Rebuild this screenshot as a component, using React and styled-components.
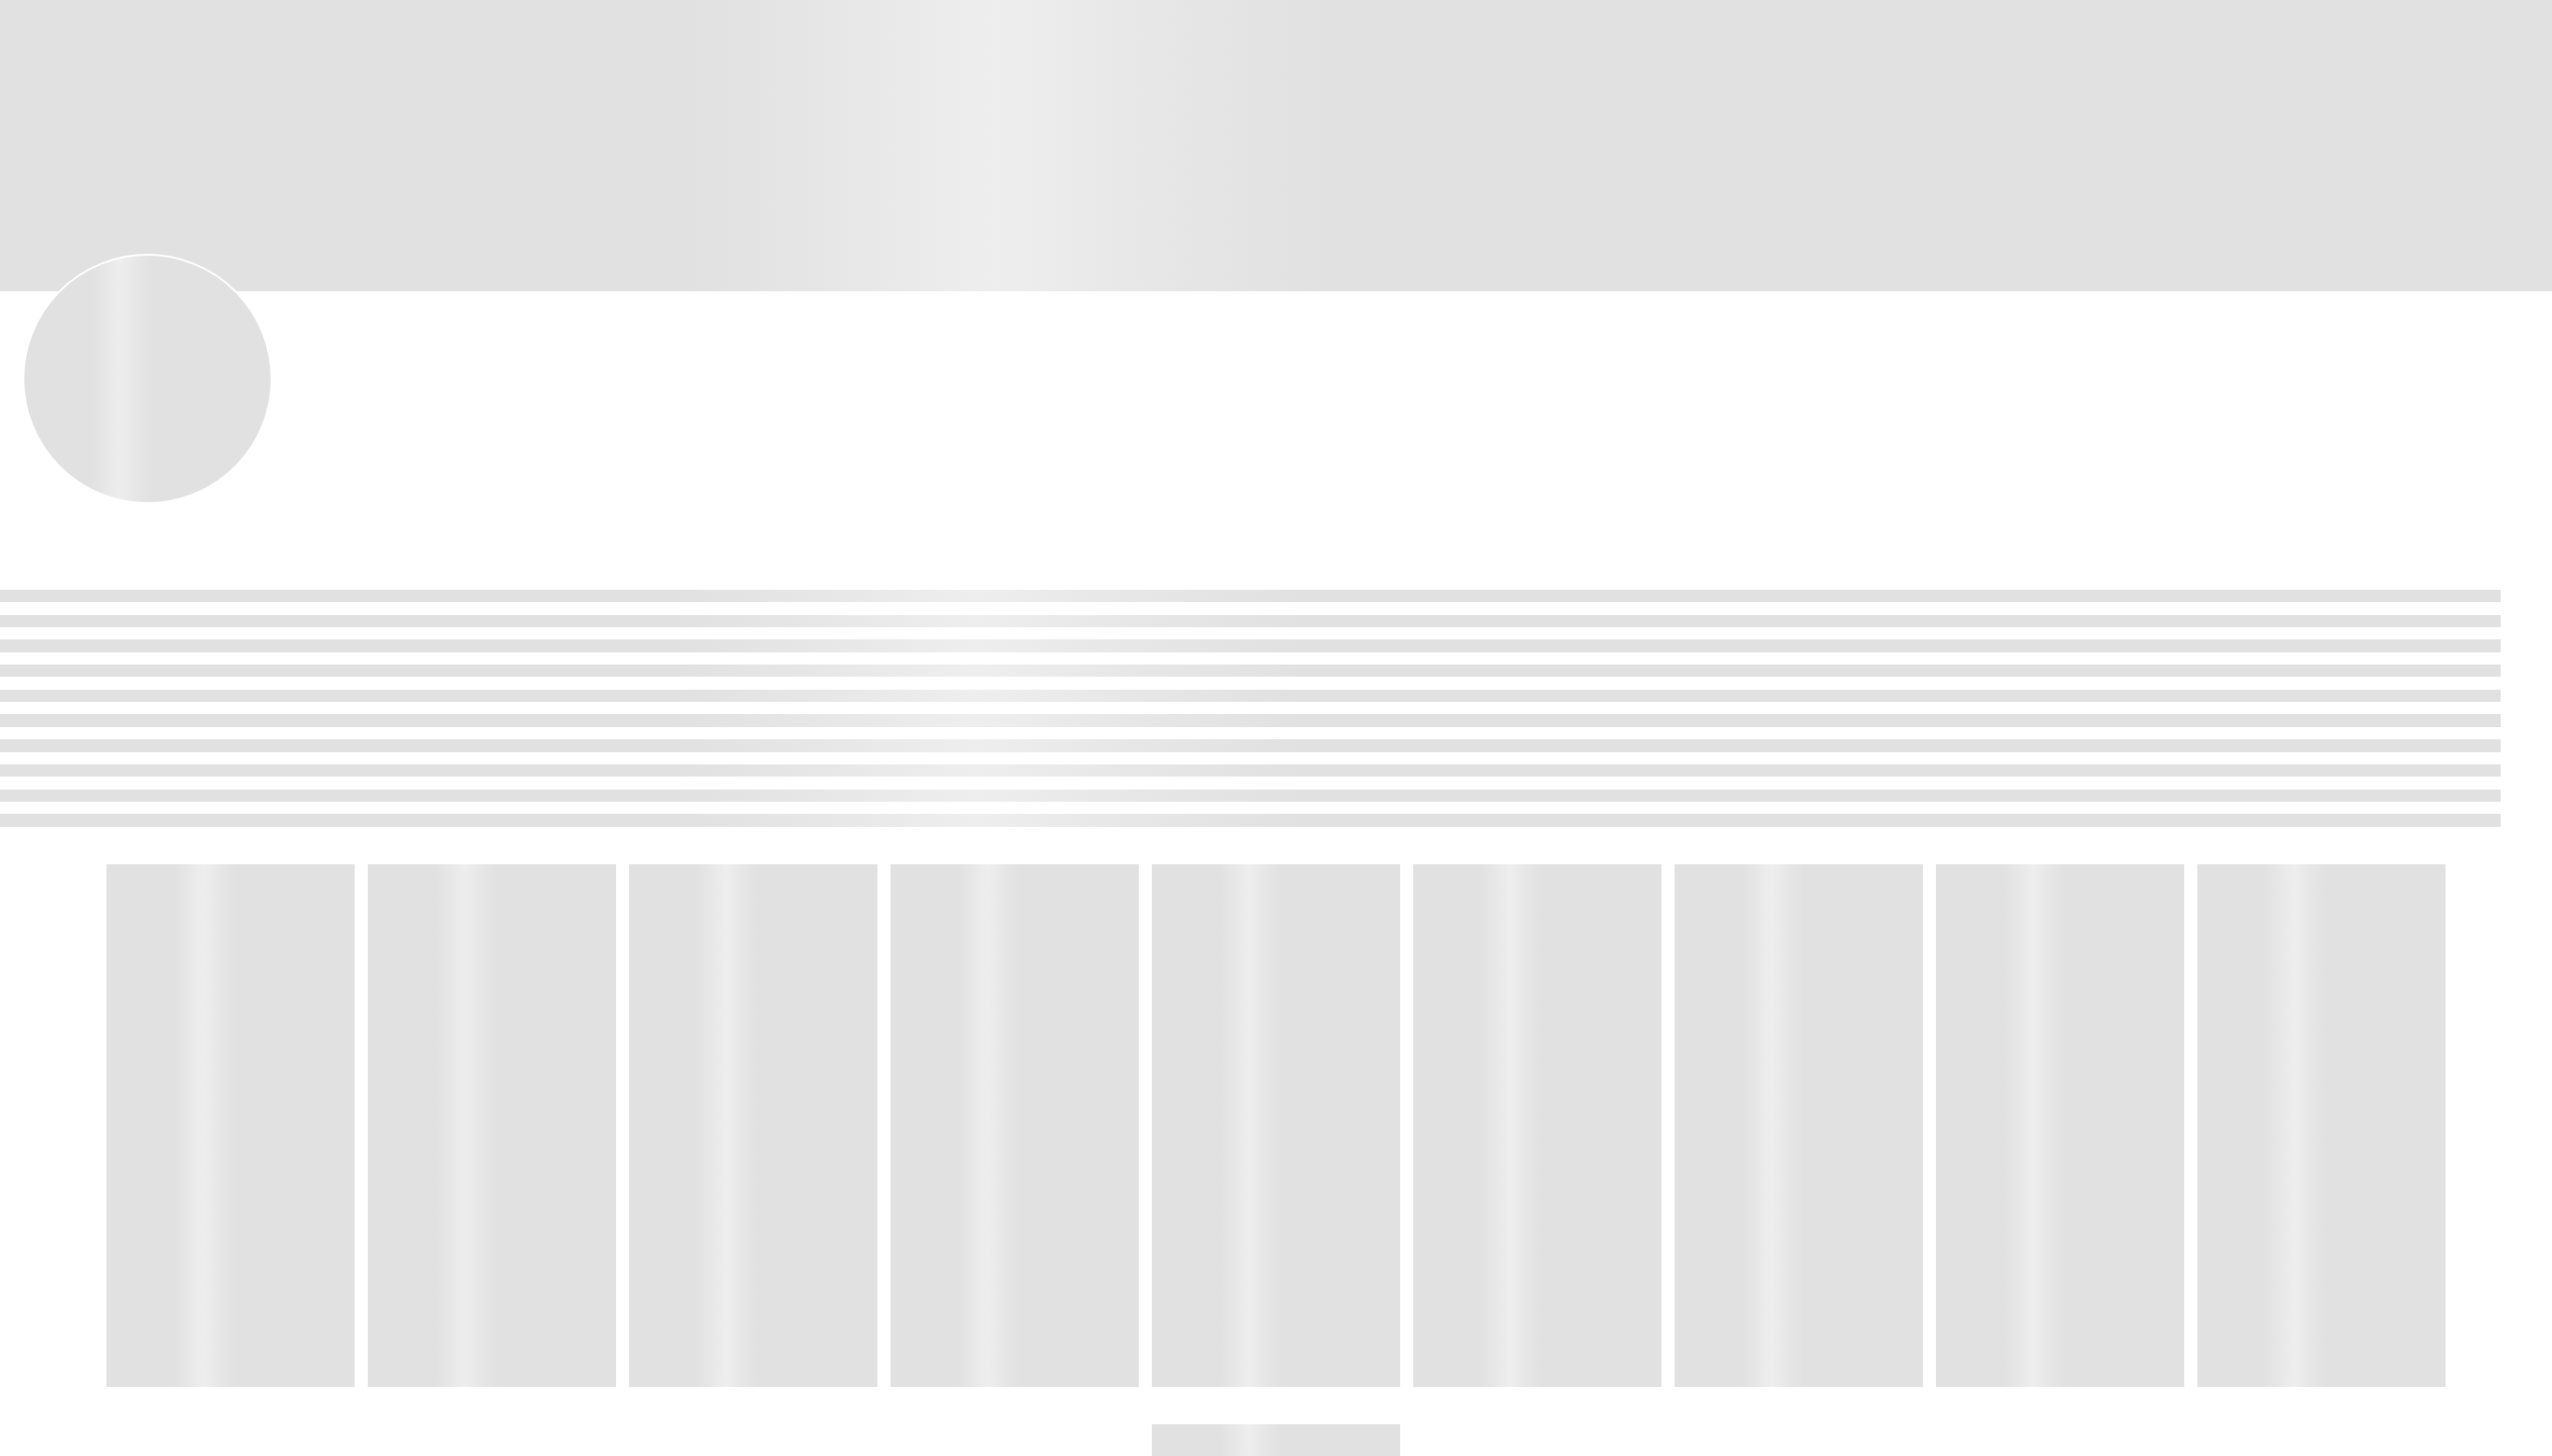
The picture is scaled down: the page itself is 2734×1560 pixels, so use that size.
import React from 'react'
import styled, { createGlobalStyle, css } from 'styled-components'

const GlobalStyle = createGlobalStyle`
  html, body {
    margin: 0;
    padding: 0;
    background: #fff;
    font-family: 'Liberation Sans', Arial, sans-serif;
  }
`

// frozen frame of the loading shimmer
const shimmer = css`
  background-color: #e1e1e1;
  background-image: linear-gradient(
    90deg,
    #e1e1e1 27%,
    #e7e7e7 33%,
    #eeeeee 39%,
    #e7e7e7 45%,
    #e1e1e1 52%
  );
`

const Page = styled.div`
  width: 100%;
  min-height: 100vh;
  background: #fff;
`

const Banner = styled.div`
  ${shimmer};
  width: 100%;
  height: 312px;
`

const ProfileHeader = styled.div`
  display: flex;
  align-items: flex-start;
  padding-left: 24px;
  margin-top: -40px;
  position: relative;
`

const Avatar = styled.div`
  ${shimmer};
  width: 264px;
  height: 264px;
  border-radius: 50%;
  border: 2px solid #fff;
`

const TextBlock = styled.div`
  width: 98%;
  margin-top: 92px;
  display: flex;
  flex-direction: column;
  gap: 13.3px;
`

const Line = styled.div`
  ${shimmer};
  height: 13.4px;
  width: 100%;
`

const CardGrid = styled.div`
  margin-top: 40px;
  display: flex;
  flex-wrap: wrap;
  justify-content: center;
  column-gap: 14px;
  row-gap: 40px;
`

const Card = styled.div`
  ${shimmer};
  width: 266px;
  height: 560px;
`

export default function App() {
  const lines = Array.from({ length: 10 })
  const cards = Array.from({ length: 10 })

  return (
    <Page>
      <GlobalStyle />
      <Banner />
      <ProfileHeader>
        <Avatar />
      </ProfileHeader>
      <TextBlock>
        {lines.map((_, i) => (
          <Line key={i} />
        ))}
      </TextBlock>
      <CardGrid>
        {cards.map((_, i) => (
          <Card key={i} />
        ))}
      </CardGrid>
    </Page>
  )
}
